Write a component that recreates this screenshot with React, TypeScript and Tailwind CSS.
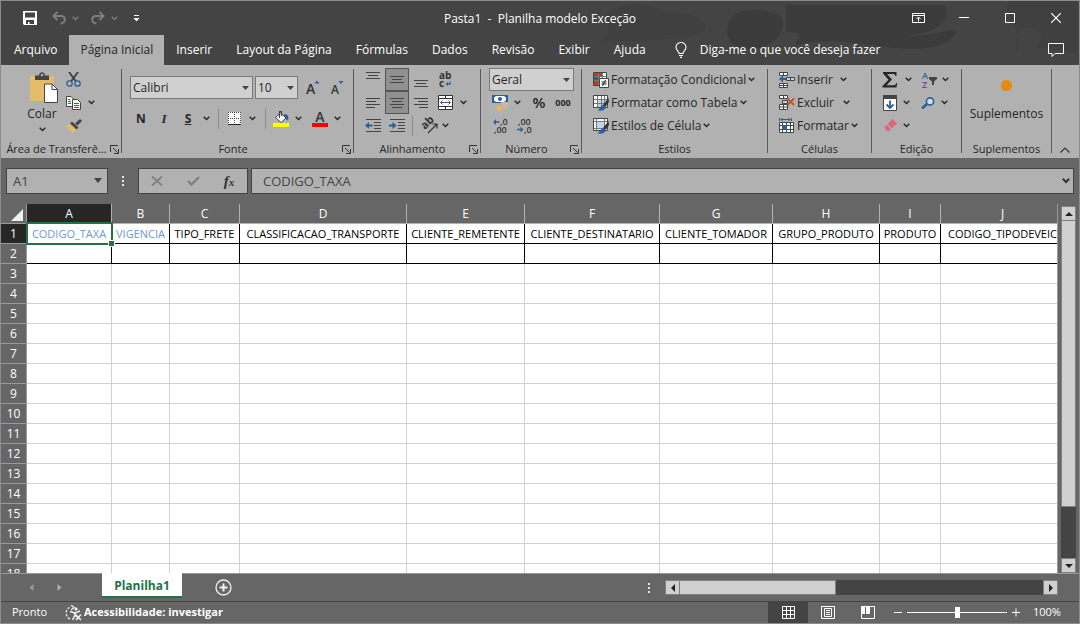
import type { ReactNode } from "react";

const columns = [
  { letter: "A", label: "CODIGO_TAXA", width: 85 },
  { letter: "B", label: "VIGENCIA", width: 58 },
  { letter: "C", label: "TIPO_FRETE", width: 70 },
  { letter: "D", label: "CLASSIFICACAO_TRANSPORTE", width: 167 },
  { letter: "E", label: "CLIENTE_REMETENTE", width: 118 },
  { letter: "F", label: "CLIENTE_DESTINATARIO", width: 135 },
  { letter: "G", label: "CLIENTE_TOMADOR", width: 113 },
  { letter: "H", label: "GRUPO_PRODUTO", width: 107 },
  { letter: "I", label: "PRODUTO", width: 61 },
  { letter: "J", label: "CODIGO_TIPODEVEIC", width: 124 },
];

const rows = Array.from({ length: 18 }, (_, i) => i + 1);

const menuTabs = [
  "Arquivo",
  "Página Inicial",
  "Inserir",
  "Layout da Página",
  "Fórmulas",
  "Dados",
  "Revisão",
  "Exibir",
  "Ajuda",
];

function Chevron({ className = "" }: { className?: string }) {
  return (
    <svg width="7" height="5" viewBox="0 0 7 5" className={`shrink-0 ${className}`} fill="none" stroke="currentColor" strokeWidth="1.4">
      <path d="M.7 .7L3.5 3.5L6.3 .7" />
    </svg>
  );
}

// little button that holds only a drop-down arrow
function DropButton({ label, className = "w-4" }: { label: string; className?: string }) {
  return (
    <button aria-label={label} className={`h-[23px] shrink-0 flex items-center justify-center ${className}`}>
      <Chevron />
    </button>
  );
}

function IconButton({ label, className = "w-6", children }: { label: string; className?: string; children: ReactNode }) {
  return (
    <button aria-label={label} className={`h-[23px] shrink-0 flex items-center justify-center ${className}`}>
      {children}
    </button>
  );
}

function Lines({ rows, height = 16 }: { rows: number[][]; height?: number }) {
  return (
    <svg width="14" height={height} viewBox={`0 0 14 ${height}`} shapeRendering="crispEdges" fill="#444">
      {rows.map(([x, y, w]) => (
        <rect key={y} x={x} y={y} width={w} height="1" />
      ))}
    </svg>
  );
}

function Launcher({ label }: { label: string }) {
  return (
    <button aria-label={label} className="shrink-0">
      <svg width="9" height="9" viewBox="0 0 9 9" fill="none" stroke="#333">
        <path d="M.5 7V.5H8M3 3L7.5 7.5M8.5 4V8.5H4" />
      </svg>
    </button>
  );
}

interface GroupParams {
  title: string;
  width: string;
  launcher?: boolean;
  children: ReactNode;
}
function Group({ title, width, launcher, children }: GroupParams) {
  return (
    <>
      <section aria-label={title} className={`shrink-0 flex flex-col ${width}`}>
        <div className="h-[69px]">{children}</div>
        <div className="h-[21px] pt-1 px-[2px] flex items-center">
          <span className="flex-1 text-center whitespace-nowrap">{title}</span>
          {launcher && <Launcher label={`Opções de ${title}`} />}
        </div>
      </section>
      <div className="w-px h-[84px] mt-px bg-[#5a5a5a] shrink-0" />
    </>
  );
}

interface PickerParams {
  label: string;
  value: string;
  className: string;
}
function Picker({ label, value, className }: PickerParams) {
  return (
    <div className={`relative h-[23px] ${className}`}>
      <select aria-label={label} className="appearance-none w-full h-full border border-[#7a7a7a] bg-[#d0d0d0] pl-[2px] text-xs text-[#262626]">
        <option>{value}</option>
      </select>
      <svg width="7" height="4" viewBox="0 0 7 4" className="absolute right-[4px] top-[10px] pointer-events-none">
        <path d="M0 0H7L3.5 4Z" fill="#444" />
      </svg>
    </div>
  );
}

function TitleBar() {
  return (
    <div className="h-[34px] grid grid-cols-[1fr_auto_1fr] items-center">
      <div className="flex items-center pl-[22px] text-[#7d7d7d]">
        <button aria-label="Salvar">
          <svg width="14" height="14" viewBox="0 0 14 14" fill="#fff">
            <path fillRule="evenodd" d="M0 0H14V14H1L0 13ZM2 1.5V6.5H12V1.5ZM3 9V13H5V11H6.500V13H11V9Z" />
          </svg>
        </button>
        <button aria-label="Desfazer" className="ml-[15px]">
          <svg width="14" height="14" viewBox="0 0 14 14" fill="none" stroke="currentColor" strokeWidth="2">
            <path d="M5.500 1L1.500 5L5.500 9M2 5H9.500C14 5.500 14 12 8.500 12.500" />
          </svg>
        </button>
        <Chevron className="ml-[6px]" />
        <button aria-label="Refazer" className="ml-[12px]">
          <svg width="14" height="14" viewBox="0 0 14 14" fill="none" stroke="currentColor" strokeWidth="2">
            <path d="M8.500 1L12.500 5L8.500 9M12 5H4.500C0 5.500 0 12 5.500 12.500" />
          </svg>
        </button>
        <Chevron className="ml-[6px]" />
        <button aria-label="Personalizar acesso rápido" className="ml-[15px]">
          <svg width="7" height="7" viewBox="0 0 7 7" fill="#fff">
            <path d="M1 0H6V1H1ZM0.500 3H6.500L3.500 6.500Z" />
          </svg>
        </button>
      </div>
      <h1 className="text-xs text-white whitespace-pre pt-[2px]">{"Pasta1  -  Planilha modelo Exceção"}</h1>
      <div className="flex justify-end text-white">
        <button aria-label="Opções de exibição da faixa" className="w-[46px] h-[30px] flex items-center justify-center">
          <svg width="13" height="10" viewBox="0 0 13 10" fill="none" stroke="currentColor">
            <path d="M.5 .5H12.500V9.500H.5ZM.5 2.500H12.500M6.500 8.500V4.500M4.500 6L6.500 4L8.500 6" />
          </svg>
        </button>
        <button aria-label="Minimizar" className="w-[46px] h-[30px] flex items-center justify-center">
          <svg width="10" height="10" viewBox="0 0 10 10" fill="none" stroke="currentColor">
            <path d="M0 4.500H10" />
          </svg>
        </button>
        <button aria-label="Maximizar" className="w-[46px] h-[30px] flex items-center justify-center">
          <svg width="10" height="10" viewBox="0 0 10 10" fill="none" stroke="currentColor">
            <path d="M.5 .5H9.500V9.500H.5Z" />
          </svg>
        </button>
        <button aria-label="Fechar" className="w-[46px] h-[30px] flex items-center justify-center">
          <svg width="10" height="10" viewBox="0 0 10 10" fill="none" stroke="currentColor" strokeWidth="1.2">
            <path d="M0 0L10 10M10 0L0 10" />
          </svg>
        </button>
      </div>
    </div>
  );
}

function MenuBar() {
  return (
    <div className="h-[30px] flex items-center text-white text-[12px]">
      <nav className="flex h-full pl-px" role="tablist">
        {menuTabs.map((tab) => (
          <button
            key={tab}
            role="tab"
            aria-selected={tab === "Página Inicial"}
            className={
              tab === "Página Inicial"
                ? "px-[11px] bg-[#b1b1b1] text-[#262626] whitespace-nowrap"
                : "px-3 whitespace-nowrap"
            }
          >
            {tab}
          </button>
        ))}
      </nav>
      <button className="flex items-center ml-[17px] whitespace-nowrap">
        <svg width="12" height="16" viewBox="0 0 12 16" fill="none" stroke="currentColor" strokeWidth="1.1" className="mr-[13px]">
          <path d="M4 11.500C4 9 1 8.500 1 5.300A5 4.800 0 0 1 11 5.300C11 8.500 8 9 8 11.500ZM4 13.500H8M5 15.400H7" />
        </svg>
        Diga-me o que você deseja fazer
      </button>
      <button aria-label="Comentários" className="ml-auto mr-[15px]">
        <svg width="16" height="14" viewBox="0 0 16 14" fill="none" stroke="currentColor">
          <path d="M.5 .5H15.500V10.500H7L4 13.500V10.500H.5Z" />
        </svg>
      </button>
    </div>
  );
}

function Clipboard() {
  return (
    <div className="flex">
      <button className="w-[58px] ml-3 pt-[4px] flex flex-col items-center">
        <svg width="28" height="31" viewBox="0 0 28 31" className="ml-[3px]">
          <path d="M0 4H24V29H0Z" fill="#e5bd6a" />
          <path d="M5 8V3.500H9C9 -1 15 -1 15 3.500H19V8Z" fill="#444" />
          <circle cx="12" cy="3" r="1.300" fill="#b1b1b1" />
          <path d="M14.500 12H22L27.500 17.500V30.500H14.500Z" fill="#fff" stroke="#444" />
          <path d="M22 12V17.500H27.500" fill="none" stroke="#444" />
        </svg>
        <span className="leading-4 mt-[3px] text-[12px]">Colar</span>
        <Chevron className="mt-[5px]" />
      </button>
      <div className="-ml-[6px]">
        <IconButton label="Recortar" className="w-[17px]">
          <svg width="15" height="15" viewBox="0 0 15 15" fill="none">
            <path d="M3 0L10 9.500M12 0L5 9.500" stroke="#444" strokeWidth="2" />
            <circle cx="3.500" cy="11.500" r="2.700" stroke="#2a6099" strokeWidth="1.300" />
            <circle cx="11.500" cy="11.500" r="2.700" stroke="#2a6099" strokeWidth="1.300" />
          </svg>
        </IconButton>
        <div className="flex">
          <IconButton label="Copiar" className="w-[17px]">
            <svg width="15" height="14" viewBox="0 0 15 14" fill="#fff" stroke="#444">
              <path d="M.5 .5H5L7.500 3V10.500H.5Z" />
              <path d="M6.500 3.500H11.500L14.500 6.500V13.500H6.500Z" />
              <path d="M2 3.500H4.500M2 5.500H5M2 7.500H5M8 7.500H13M8 9.500H13M8 11.500H13" stroke="#2a6099" />
            </svg>
          </IconButton>
          <DropButton label="Opções de copiar" className="w-[18px]" />
        </div>
        <IconButton label="Pincel de formatação" className="w-[17px]">
          <svg width="16" height="14" viewBox="0 0 16 14">
            <path d="M5 4L11 10L6.500 14L0 7.500Z" fill="#e5bd6a" />
            <path d="M6 2.500L12.500 8.500L10.500 10.500L4 4.500ZM9 4.500L14 0L16 2L11.500 6.500Z" fill="#444" />
          </svg>
        </IconButton>
      </div>
    </div>
  );
}

function FontTools() {
  return (
    <div className="pt-2 pl-2 flex flex-col gap-2">
      <div className="flex">
        <Picker label="Fonte" value="Calibri" className="w-[123px]" />
        <Picker label="Tamanho da fonte" value="10" className="w-[43px] ml-[2px]" />
        <IconButton label="Aumentar fonte" className="w-6 ml-[3px]">
          <svg width="14" height="16" viewBox="0 0 14 16" className="overflow-visible">
            <text x="0" y="14" fontSize="14" fontFamily="Open Sans, sans-serif" fontWeight="600" fill="#333">A</text>
            <path d="M8.500 3.500L11 0.500L13.500 3.500Z" fill="#2a6099" />
          </svg>
        </IconButton>
        <IconButton label="Diminuir fonte">
          <svg width="13" height="16" viewBox="0 0 13 16" className="overflow-visible">
            <text x="0" y="14" fontSize="12" fontFamily="Open Sans, sans-serif" fontWeight="600" fill="#333">A</text>
            <path d="M7.500 1H12.500L10 4Z" fill="#2a6099" />
          </svg>
        </IconButton>
      </div>
      <div className="flex items-center text-[12px] text-[#262626]">
        <button className="w-[22px] font-bold">N</button>
        <button className="w-6 text-[13px] font-bold italic font-['Liberation_Serif',serif]">I</button>
        <button className="w-6 font-bold underline">S</button>
        <DropButton label="Opções de sublinhado" className="w-3" />
        <div className="w-px h-[20px] bg-[#8c8c8c] ml-[6px]" />
        <IconButton label="Bordas" className="w-[14px] ml-2">
          <svg width="13" height="13" viewBox="0 0 13 13" shapeRendering="crispEdges">
            <rect width="13" height="12" fill="#fff" />
            <path d="M0 .5H13M.5 0V12M12.500 0V12M6.500 0V12M0 6.500H13" stroke="#444" strokeDasharray="1 1" fill="none" />
            <path d="M0 12.500H13" stroke="#262626" />
          </svg>
        </IconButton>
        <DropButton label="Opções de bordas" className="w-[22px]" />
        <div className="w-px h-[20px] bg-[#8c8c8c] ml-[2px]" />
        <IconButton label="Cor de preenchimento" className="w-4 ml-[7px]">
          <svg width="16" height="16" viewBox="0 0 16 16">
            <path d="M12 3C15 3.500 16 6 15 9.500C13 9 13 7 10 5Z" fill="#2a6099" />
            <path d="M7.500 2L13 7L8 11.500L2.500 6.500Z" fill="#fff" stroke="#444" />
            <path d="M6.500 7V.5H8.500V5" fill="none" stroke="#444" strokeWidth="1.200" />
            <rect y="12" width="16" height="4" fill="#ff0" />
          </svg>
        </IconButton>
        <DropButton label="Opções de preenchimento" className="w-[18px]" />
        <IconButton label="Cor da fonte" className="w-4 ml-[5px]">
          <svg width="16" height="16" viewBox="0 0 16 16" className="overflow-visible">
            <text x="8" y="11" textAnchor="middle" fontSize="14" fontFamily="Open Sans, sans-serif" fontWeight="600" fill="#333">A</text>
            <rect y="12" width="16" height="4" fill="#f00" />
          </svg>
        </IconButton>
        <DropButton label="Opções de cor" className="w-[18px]" />
      </div>
    </div>
  );
}

function AlignmentTools() {
  return (
    <div className="pl-[7px]">
      <div className="flex">
        <IconButton label="Alinhar em cima">
          <Lines rows={[[0, 0, 14], [2, 3, 10], [0, 6, 14]]} />
        </IconButton>
        <IconButton label="Alinhar no meio" className="w-6 bg-[#909090] border border-[#555]">
          <Lines rows={[[0, 4, 14], [2, 7, 10], [0, 10, 14]]} />
        </IconButton>
        <IconButton label="Alinhar embaixo">
          <Lines rows={[[0, 8, 14], [2, 11, 10], [0, 14, 14]]} />
        </IconButton>
        <IconButton label="Quebrar texto automaticamente">
          <svg width="14" height="16" viewBox="0 0 14 16" className="overflow-visible">
            <text x="1" y="7" fontSize="10" fontFamily="Open Sans, sans-serif" fontWeight="700" fill="#333">ab</text>
            <text x="1" y="15" fontSize="10" fontFamily="Open Sans, sans-serif" fontWeight="700" fill="#333">c</text>
            <path d="M7.500 12L10 10V11.300H11.500V9.500H12.700V12.700H10V14Z" fill="#2a6099" />
          </svg>
        </IconButton>
      </div>
      <div className="flex">
        <IconButton label="Alinhar à esquerda">
          <Lines rows={[[0, 3, 14], [0, 6, 10], [0, 9, 14], [0, 12, 9]]} />
        </IconButton>
        <IconButton label="Centralizar" className="w-6 bg-[#909090] border border-[#555]">
          <Lines rows={[[0, 3, 14], [2, 6, 10], [0, 9, 14], [2, 12, 10]]} />
        </IconButton>
        <IconButton label="Alinhar à direita">
          <Lines rows={[[0, 3, 14], [4, 6, 10], [0, 9, 14], [5, 12, 9]]} />
        </IconButton>
        <IconButton label="Mesclar e centralizar">
          <svg width="15" height="15" viewBox="0 0 15 15" fill="none" stroke="#333">
            <path d="M.5 .5H14.500V14.500H.5ZM.5 3.500H14.500M.5 11.500H14.500M7.500 .5V3.500M7.500 11.500V14.500" fill="#fff" />
            <path d="M3 7.500H12M4.500 5.500L2.500 7.500L4.500 9.500M10.500 5.500L12.500 7.500L10.500 9.500" stroke="#2a6099" />
          </svg>
        </IconButton>
        <DropButton label="Opções de mesclar" className="w-3" />
      </div>
      <div className="flex items-center">
        <IconButton label="Diminuir recuo">
          <svg width="16" height="14" viewBox="0 0 16 14">
            <path d="M1 .5H16M9 3.500H16M9 6.500H16M9 9.500H16M1 12.500H16" stroke="#444" />
            <path d="M0 6.500L4 3V5.500H7.500V7.500H4V10Z" fill="#2a6099" />
          </svg>
        </IconButton>
        <IconButton label="Aumentar recuo">
          <svg width="16" height="14" viewBox="0 0 16 14">
            <path d="M1 .5H16M9 3.500H16M9 6.500H16M9 9.500H16M1 12.500H16" stroke="#444" />
            <path d="M7.500 6.500L3.500 3V5.500H0V7.500H3.500V10Z" fill="#2a6099" />
          </svg>
        </IconButton>
        <div className="w-px h-[20px] bg-[#8c8c8c] ml-[3px]" />
        <IconButton label="Orientação" className="w-6 ml-1">
          <svg width="17" height="16" viewBox="0 0 17 16" className="overflow-visible">
            <text x="4" y="12" fontSize="11" fontFamily="Open Sans, sans-serif" fontWeight="700" fill="#333" transform="rotate(-45 4 12)">ab</text>
            <path d="M7 15L15.500 6.500M11.500 6H16V10.500" stroke="#333" fill="none" strokeWidth="1.200" />
          </svg>
        </IconButton>
        <DropButton label="Opções de orientação" className="w-2" />
      </div>
    </div>
  );
}

function NumberTools() {
  return (
    <div className="pl-[8px]">
      <Picker label="Formato de número" value="Geral" className="w-[85px]" />
      <div className="flex">
        <IconButton label="Formato de contabilização" className="w-[22px]">
          <svg width="16" height="16" viewBox="0 0 16 16">
            <path d="M0 0H16V8H0Z" fill="#2a6099" />
            <path d="M2 2.500L4 1H12L14 2.500V5.500L12 7H4L2 5.500Z" fill="#fff" />
            <circle cx="8" cy="4" r="2" fill="#2a6099" />
            <path d="M9 7H16V15H4V11H9Z" fill="#b1b1b1" />
            <path d="M10 8.500H15.500M10 10.500H15.500M10 12.500H15.500M4.500 11.500H9M4.500 13.500H10M5 15.400H10" stroke="#e5bd6a" strokeWidth="1.300" />
          </svg>
        </IconButton>
        <DropButton label="Opções de contabilização" className="w-3" />
        <button className="w-8 text-[15px] leading-[23px] font-semibold">%</button>
        <button className="w-4 text-[9px] font-bold">000</button>
      </div>
      <div className="flex">
        <IconButton label="Aumentar casas decimais">
          <svg width="16" height="16" viewBox="0 0 16 16" fontSize="9" fontFamily="Open Sans, sans-serif" fontWeight="600" fill="#333" className="overflow-visible">
            <text x="7" y="7">,0</text>
            <text x="1" y="15">,00</text>
            <path d="M0 4L3 1V3.200H6.500V4.800H3V7Z" fill="#2a6099" />
          </svg>
        </IconButton>
        <IconButton label="Diminuir casas decimais">
          <svg width="16" height="16" viewBox="0 0 16 16" fontSize="9" fontFamily="Open Sans, sans-serif" fontWeight="600" fill="#333" className="overflow-visible">
            <text x="1" y="7">,00</text>
            <text x="7" y="15">,0</text>
            <path d="M6.500 11.500L3.500 8.500V10.700H0V12.300H3.500V14.500Z" fill="#2a6099" />
          </svg>
        </IconButton>
      </div>
    </div>
  );
}

function StyleBrush() {
  return (
    <>
      <path d="M15.500 3L16 7L12 12L10 10Z" fill="#333" />
      <path d="M10.500 9.500L13 12C12 15.500 9 16 4.500 15.500C7 14 7 11 10.500 9.500Z" fill="#2a6099" />
    </>
  );
}

function StyleTools() {
  return (
    <div className="pl-[11px] text-[12px]">
      <button className="h-[23px] flex items-center whitespace-nowrap">
        <svg width="16" height="16" viewBox="0 0 16 16" className="mr-[2px]">
          <path d="M.5 .5H13.500V13.500H.5Z" fill="#fff" stroke="#444" />
          <path d="M1 1H9V4H1ZM1 9H5V13H1Z" fill="#c8391b" />
          <path d="M1 5H7V8H1Z" fill="#2a6099" />
          <path d="M5.500 1V13M9.500 1V6M1 4.500H13M1 8.500H6" stroke="#777" fill="none" />
          <path d="M6.500 6.500H15.500V15.500H6.500Z" fill="#fff" stroke="#444" />
          <path d="M8.500 10H13.500M8.500 12H13.500M12.500 8L9.500 14" stroke="#222" fill="none" />
        </svg>
        Formatação Condicional
        <Chevron className="ml-[2px]" />
      </button>
      <button className="h-[23px] flex items-center whitespace-nowrap">
        <svg width="16" height="16" viewBox="0 0 16 16" className="mr-[2px]">
          <path d="M.5 .5H14.500V12.500H.5Z" fill="#fff" stroke="#444" />
          <path d="M5 5H14V12H5Z" fill="#c3d4e6" />
          <path d="M4.500 1V12M8.500 1V12M11.500 1V12M1 4.500H14M1 8.500H14" stroke="#777" fill="none" />
          <StyleBrush />
        </svg>
        Formatar como Tabela
        <Chevron className="ml-[2px]" />
      </button>
      <button className="h-[23px] flex items-center whitespace-nowrap">
        <svg width="16" height="16" viewBox="0 0 16 16" className="mr-[2px]">
          <path d="M.5 .5H14.500V12.500H.5Z" fill="#fff" stroke="#444" />
          <path d="M4 4H11V10H4Z" fill="#c3d4e6" />
          <path d="M3.500 1V12M11.500 1V12M1 3.500H14M1 10.500H14" stroke="#777" fill="none" />
          <StyleBrush />
        </svg>
        Estilos de Célula
        <Chevron className="ml-[2px]" />
      </button>
    </div>
  );
}

function CellTools() {
  return (
    <div className="pl-[11px] text-[12px]">
      <button className="h-[23px] flex items-center">
        <svg width="16" height="16" viewBox="0 0 16 16" className="mr-[2px]" fill="#fff" stroke="#444">
          <path d="M.5 .5H8.500V3.500H.5ZM4.500 .5V3.500M.5 11.500H8.500V15.500H.5ZM4.500 11.500V15.500M.5 13.500H8.500" />
          <path d="M7.500 5.500H15.500V8.500H7.500ZM11.500 5.500V8.500" fill="#c3d4e6" />
          <path d="M0 7L4 3.500V6H7V8H4V10.500Z" fill="#2a6099" stroke="none" />
        </svg>
        <span className="w-[43px] text-left">Inserir</span>
        <Chevron />
      </button>
      <button className="h-[23px] flex items-center">
        <svg width="16" height="16" viewBox="0 0 16 16" className="mr-[2px]" fill="#fff" stroke="#444">
          <path d="M.5 .5H8.500V3.500H.5ZM4.500 .5V3.500M.5 9.500H8.500V14.500H.5ZM4.500 9.500V14.500M.5 12H8.500" />
          <path d="M3.500 5.500H8.500V8.500H3.500Z" fill="#c3d4e6" />
          <path d="M8.500 3.500L15 10M15 3.500L8.500 10" stroke="#c8502e" strokeWidth="1.800" />
        </svg>
        <span className="w-[46px] text-left">Excluir</span>
        <Chevron />
      </button>
      <button className="h-[23px] flex items-center">
        <svg width="16" height="16" viewBox="0 0 16 16" className="mr-[2px]" fill="#fff" stroke="#444">
          <path d="M.5 4.500H14.500V14.500H.5ZM.5 7.500H14.500M.5 11.500H14.500M3.500 4.500V14.500M7.500 4.500V14.500M11.500 4.500V14.500" />
          <path d="M3.500 7.500H7.500V11.500H3.500Z" fill="#2a6099" stroke="#2a6099" />
          <path d="M.5 0V3M12.500 0V3M2 1.500H11M3.500 0L2 1.500L3.500 3M9.500 0L11 1.500L9.500 3" fill="none" stroke="#2a6099" />
        </svg>
        <span className="text-left">Formatar</span>
        <Chevron className="ml-[2px]" />
      </button>
    </div>
  );
}

function EditTools() {
  return (
    <div className="pl-2">
      <div className="flex">
        <IconButton label="AutoSoma" className="w-5">
          <svg width="16" height="16" viewBox="0 0 16 16">
            <path d="M1 0H14.500V4H13.500C13.200 2.500 12.500 2 11 2H5L10 7.500L4.500 13.200H11.500C13 13.200 13.700 12.500 14.200 11H15.200L14.500 15.500H.5V14L6.500 7.800L1 1.500Z" fill="#262626" />
          </svg>
        </IconButton>
        <DropButton label="Opções de AutoSoma" />
        <IconButton label="Classificar e filtrar" className="w-5 ml-[3px]">
          <svg width="16" height="16" viewBox="0 0 16 16" fontFamily="Open Sans, sans-serif" fontWeight="600" fontSize="9" className="overflow-visible">
            <text x="1" y="7" fill="#2a6099">A</text>
            <text x="1" y="16" fill="#7b3fa0">Z</text>
            <path d="M8 5H16V7L13 9.500V13H11V9.500L8 7Z" fill="#444" />
          </svg>
        </IconButton>
        <DropButton label="Opções de classificar" className="w-3" />
      </div>
      <div className="flex">
        <IconButton label="Preencher" className="w-5">
          <svg width="14" height="16" viewBox="0 0 14 16">
            <path d="M.5 3.500H13.500V15.500H.5Z" fill="#fff" stroke="#444" />
            <path d="M0 0H14V4H0Z" fill="#444" />
            <path d="M7 5.500V13M3.500 9.500L7 13L10.500 9.500" stroke="#2a6099" strokeWidth="1.800" fill="none" />
          </svg>
        </IconButton>
        <DropButton label="Opções de preencher" className="w-3" />
        <IconButton label="Localizar e selecionar" className="w-5 ml-[6px]">
          <svg width="14" height="12" viewBox="0 0 14 12" fill="none" stroke="#2a6099">
            <circle cx="9" cy="4.500" r="3.600" strokeWidth="1.600" fill="#d5dfea" />
            <path d="M6 7L1 11.500" strokeWidth="2.600" />
          </svg>
        </IconButton>
        <DropButton label="Opções de localizar" className="w-3" />
      </div>
      <div className="flex">
        <IconButton label="Limpar" className="w-5">
          <svg width="13" height="13" viewBox="0 0 13 13" fill="#d9687f">
            <path d="M8.500 0L13 4.500L7.800 9.500L3.500 5Z" />
            <path d="M2.700 5.700L7 10.200L4.200 12.800L0 8.500Z" />
          </svg>
        </IconButton>
        <DropButton label="Opções de limpar" className="w-3" />
      </div>
    </div>
  );
}

function Ribbon() {
  return (
    <div className="h-[93px] pt-[3px] flex bg-[#b1b1b1] text-[#262626] text-[11px] overflow-hidden">
      <Group title="Área de Transferê..." width="w-[120px]" launcher>
        <Clipboard />
      </Group>
      <Group title="Fonte" width="w-[231px]" launcher>
        <FontTools />
      </Group>
      <Group title="Alinhamento" width="w-[126px]" launcher>
        <AlignmentTools />
      </Group>
      <Group title="Número" width="w-[100px]" launcher>
        <NumberTools />
      </Group>
      <Group title="Estilos" width="w-[185px]">
        <StyleTools />
      </Group>
      <Group title="Células" width="w-[103px]">
        <CellTools />
      </Group>
      <Group title="Edição" width="w-[89px]">
        <EditTools />
      </Group>
      <Group title="Suplementos" width="w-[89px]">
        <button className="w-full flex flex-col items-center pt-3 text-[12px]">
          <span className="size-[11px] rounded-full bg-[#e68a0c]" />
          <span className="leading-4 mt-[15px]">Suplementos</span>
        </button>
      </Group>
      <button aria-label="Recolher a faixa" className="ml-auto mr-[9px] mb-[5px] self-end">
        <svg width="10" height="6" viewBox="0 0 10 6" fill="none" stroke="#333" strokeWidth="1.200">
          <path d="M.5 5.500L5 1L9.500 5.500" />
        </svg>
      </button>
    </div>
  );
}

function Dots() {
  return (
    <svg width="2" height="10" viewBox="0 0 2 10" fill="#e6e6e6" shapeRendering="crispEdges" className="shrink-0">
      <path d="M0 0H2V2H0ZM0 4H2V6H0ZM0 8H2V10H0Z" />
    </svg>
  );
}

function FormulaBar() {
  return (
    <div className="h-[46px] px-[5px] flex items-center text-[#444] text-[13px]">
      <div className="relative w-[102px] h-[26px]">
        <input
          aria-label="Caixa de nome"
          defaultValue="A1"
          className="w-full h-full border border-[#444] bg-[#b1b1b1] px-[6px]"
        />
        <svg width="8" height="5" viewBox="0 0 8 5" className="absolute right-[6px] top-[10px]">
          <path d="M0 0H8L4 5Z" fill="#444" />
        </svg>
      </div>
      <div className="w-[30px] flex justify-center">
        <Dots />
      </div>
      <div className="w-[110px] h-[26px] border border-[#444] bg-[#b1b1b1] flex text-[#808080]">
        <button aria-label="Cancelar" className="w-9 flex items-center justify-center">
          <svg width="12" height="10" viewBox="0 0 12 10" stroke="currentColor" strokeWidth="1.800" fill="none">
            <path d="M1 .5L11 9.500M11 .5L1 9.500" />
          </svg>
        </button>
        <button aria-label="Inserir" className="w-9 flex items-center justify-center">
          <svg width="13" height="10" viewBox="0 0 13 10" stroke="currentColor" strokeWidth="2.400" fill="none">
            <path d="M1 5L4.500 8.500L12 1" />
          </svg>
        </button>
        <button aria-label="Inserir função" className="w-9 font-bold italic text-[#333] font-['Liberation_Serif',serif] text-[15px] leading-5">
          f<span className="text-[11px]">x</span>
        </button>
      </div>
      <div className="relative flex-1 h-[26px] ml-[3px]">
        <input
          aria-label="Barra de fórmulas"
          defaultValue="CODIGO_TAXA"
          className="w-full h-full border border-[#444] bg-[#b1b1b1] px-[11px]"
        />
        <svg width="8" height="6" viewBox="0 0 8 6" className="absolute right-[4px] top-[10px]" fill="none" stroke="#333" strokeWidth="2">
          <path d="M.8 .8L4 4L7.200 .8" />
        </svg>
      </div>
    </div>
  );
}

function Sheet() {
  return (
    <div className="flex-1 min-w-0 overflow-hidden border-r border-[#999]">
      <table className="table-fixed w-max min-w-full border-separate border-spacing-0">
        <colgroup>
          <col className="w-[26px]" />
          {columns.map((col) => (
            <col key={col.letter} style={{ width: col.width }} />
          ))}
        </colgroup>
        <thead>
          <tr className="h-5 bg-[#666] text-white text-[12px] leading-4">
            <th aria-label="Selecionar tudo" className="p-0 border-r border-b border-[#999]">
              <svg width="12" height="12" viewBox="0 0 12 12" className="ml-auto mr-[3px] mt-[2px]">
                <path d="M12 0V12H0Z" fill="#f0f0f0" />
              </svg>
            </th>
            {columns.map((col) => (
              <th
                key={col.letter}
                scope="col"
                className={
                  col.letter === "A"
                    ? "p-0 font-normal bg-[#262626] border-r border-b border-r-[#b1b1b1] border-b-[#217346]"
                    : "p-0 font-normal border-r border-b border-[#b1b1b1]"
                }
              >
                {col.letter}
              </th>
            ))}
          </tr>
        </thead>
        <tbody>
          {rows.map((row) => (
            <tr key={row} className="h-5 leading-4">
              <th
                scope="row"
                className={
                  row === 1
                    ? "p-0 font-normal text-[12px] text-white bg-[#262626] border-r border-b border-[#999]"
                    : "p-0 font-normal text-[12px] text-white bg-[#666] border-r border-b border-[#999]"
                }
              >
                {row}
              </th>
              {columns.map((col, i) => (
                <td
                  key={col.letter}
                  className={
                    row <= 2
                      ? "p-0 bg-white border-r border-b border-black text-[11px] text-center whitespace-nowrap"
                      : "p-0 bg-white border-r border-b border-[#d0d0d0]"
                  }
                >
                  {row === 1 && i === 0 ? (
                    <div className="relative z-10 h-[19px] leading-[19px] text-[#6a9bd1]">
                      {col.label}
                      <span className="absolute -top-[2px] -left-px -right-[2px] -bottom-[2px] border-2 border-[#217346]">
                        <span className="absolute -right-[3px] -bottom-[3px] size-[5px] bg-[#217346] outline outline-white" />
                      </span>
                    </div>
                  ) : (
                    row === 1 && <span className={i === 1 ? "text-[#6a9bd1]" : "text-black"}>{col.label}</span>
                  )}
                </td>
              ))}
            </tr>
          ))}
        </tbody>
      </table>
    </div>
  );
}

function VerticalScroll() {
  return (
    <div className="w-[15px] ml-[3px] mr-[3px] mt-[2px] flex flex-col bg-[#444] shrink-0">
      <button aria-label="Rolar para cima" className="h-[15px] bg-[#d0d0d0] border border-[#808080] flex items-center justify-center">
        <svg width="8" height="4" viewBox="0 0 8 4"><path d="M4 0L8 4H0Z" fill="#222" /></svg>
      </button>
      <div className="flex-1 min-h-0">
        <div className="h-[85%] bg-[#d0d0d0] border border-[#808080] border-t-0" />
      </div>
      <button aria-label="Rolar para baixo" className="h-[15px] bg-[#d0d0d0] border border-[#808080] flex items-center justify-center">
        <svg width="8" height="4" viewBox="0 0 8 4"><path d="M0 0H8L4 4Z" fill="#222" /></svg>
      </button>
    </div>
  );
}

function SheetTabs() {
  return (
    <div className="h-[28px] flex border-t border-[#999] shrink-0">
      <button aria-label="Planilha anterior" className="w-[28px] ml-4 flex items-center justify-center">
        <svg width="5" height="7" viewBox="0 0 5 7"><path d="M4.500 0V7L.5 3.500Z" fill="#999" /></svg>
      </button>
      <button aria-label="Próxima planilha" className="w-[28px] flex items-center justify-center">
        <svg width="5" height="7" viewBox="0 0 5 7"><path d="M.5 0V7L4.500 3.500Z" fill="#b1b1b1" /></svg>
      </button>
      <button className="w-[80px] h-[25px] pt-[2px] -mt-px ml-[29px] bg-white border-b-2 border-[#217346] text-[#217346] text-[12px] font-bold">
        Planilha1
      </button>
      <button aria-label="Nova planilha" className="ml-[33px]">
        <svg width="17" height="17" viewBox="0 0 17 17" fill="none" stroke="#f0f0f0">
          <circle cx="8.500" cy="8.500" r="7.500" strokeWidth="1.300" />
          <path d="M8.500 4.500V12.500M4.500 8.500H12.500" strokeWidth="2" />
        </svg>
      </button>
      <div className="ml-auto flex items-center mr-[15px]">
        <Dots />
      </div>
      <div className="w-[393px] h-[15px] mt-[6px] mr-[21px] flex bg-[#444]">
        <button aria-label="Rolar para a esquerda" className="w-[15px] bg-[#d0d0d0] border border-[#808080] flex items-center justify-center">
          <svg width="4" height="8" viewBox="0 0 4 8"><path d="M4 0V8L0 4Z" fill="#222" /></svg>
        </button>
        <div className="flex-1">
          <div className="w-[43%] h-full bg-[#d0d0d0] border border-[#808080] border-l-0" />
        </div>
        <button aria-label="Rolar para a direita" className="w-[15px] bg-[#d0d0d0] border border-[#808080] flex items-center justify-center">
          <svg width="4" height="8" viewBox="0 0 4 8"><path d="M0 0V8L4 4Z" fill="#222" /></svg>
        </button>
      </div>
    </div>
  );
}

function StatusBar() {
  return (
    <div className="h-[22px] flex items-center border-t border-[#444] text-white text-[11px] shrink-0">
      <span className="ml-[11px] w-[53px]">Pronto</span>
      <button className="flex items-center gap-[2px] font-bold whitespace-nowrap">
        <svg width="17" height="16" viewBox="0 0 17 16" fill="none" stroke="#f0f0f0">
          <path d="M5 14C0 12 0 4 4.500 2.500" strokeDasharray="2.500 1.500" strokeWidth="1.300" />
          <path d="M6 0L9 2.500L6 5" strokeWidth="1.300" />
          <circle cx="11" cy="4" r="1.200" fill="#f0f0f0" />
          <path d="M5 6.500L10 8L15 6M10 8V10L7.500 15M10 10L12 12M9 8L16 15M16 9.500L11 15" strokeWidth="1.500" />
        </svg>
        Acessibilidade: investigar
      </button>
      <div className="ml-auto flex h-full">
        <button aria-label="Normal" className="w-10 bg-[#444] flex items-center justify-center">
          <svg width="13" height="13" viewBox="0 0 13 13" fill="none" stroke="#fff">
            <path d="M.5 .5H12.500V12.500H.5ZM4.500 0V13M8.500 0V13M0 4.500H13M0 8.500H13" />
          </svg>
        </button>
        <button aria-label="Layout da página" className="w-10 flex items-center justify-center">
          <svg width="14" height="13" viewBox="0 0 14 13" fill="none" stroke="#fff">
            <path d="M.5 .5H13.500V12.500H.5ZM3.500 2.500H10.500V10.500H3.500ZM5 4.500H9M5 6.500H9M5 8.500H9" />
          </svg>
        </button>
        <button aria-label="Quebra de página" className="w-10 flex items-center justify-center">
          <svg width="14" height="13" viewBox="0 0 14 13">
            <path d="M.5 .5H13.500V12.500H.5Z" fill="none" stroke="#fff" />
            <path d="M0 0H4V8H0ZM5 0H9V8H5Z" fill="#fff" />
          </svg>
        </button>
      </div>
      <button aria-label="Reduzir" className="ml-[6px]">
        <svg width="8" height="9" viewBox="0 0 8 9" stroke="#fff"><path d="M0 4.500H8" /></svg>
      </button>
      <input
        type="range"
        aria-label="Zoom"
        min="0"
        max="100"
        defaultValue="50"
        className="appearance-none bg-transparent w-[100px] h-[11px] mx-[5px] [&::-webkit-slider-runnable-track]:h-px [&::-webkit-slider-runnable-track]:bg-white [&::-webkit-slider-thumb]:appearance-none [&::-webkit-slider-thumb]:w-[5px] [&::-webkit-slider-thumb]:h-[11px] [&::-webkit-slider-thumb]:-mt-[5px] [&::-webkit-slider-thumb]:bg-white"
      />
      <button aria-label="Ampliar">
        <svg width="8" height="9" viewBox="0 0 8 9" stroke="#fff"><path d="M0 4.500H8M4 .5V8.500" /></svg>
      </button>
      <span className="w-[46px] ml-[13px]">100%</span>
    </div>
  );
}

export default function App() {
  return (
    <div className="h-screen flex flex-col border border-[#8c8c8c] bg-[#666] font-['Open_Sans','Noto_Sans',sans-serif] overflow-hidden">
      <header className="relative bg-[#444] shrink-0">
        <svg width="480" height="64" viewBox="0 0 480 64" className="absolute right-0 top-0" fill="#3b3b3b">
          <path d="M7 12C25 0 50 0 65 12C90 10 110 18 106 28C100 38 60 40 2 40L10 32Z" opacity=".5" />
          <path d="M130 20C140 5 160 8 175 12C195 16 180 50 150 48C128 46 125 32 130 20Z" />
          <path d="M187 4H345C352 20 340 32 305 35C325 36 345 30 355 29C362 30 350 48 315 48C270 47 240 34 197 44C200 34 207 31 187 31Z" />
          <path d="M418 52C414 38 420 27 431 27C443 27 446 40 437 46C450 48 470 50 478 54V0H410C400 12 425 20 418 52Z" opacity=".5" />
        </svg>
        <div className="relative">
          <TitleBar />
          <MenuBar />
        </div>
      </header>
      <Ribbon />
      <FormulaBar />
      <main className="flex-1 min-h-0 flex">
        <Sheet />
        <VerticalScroll />
      </main>
      <SheetTabs />
      <StatusBar />
    </div>
  );
}
